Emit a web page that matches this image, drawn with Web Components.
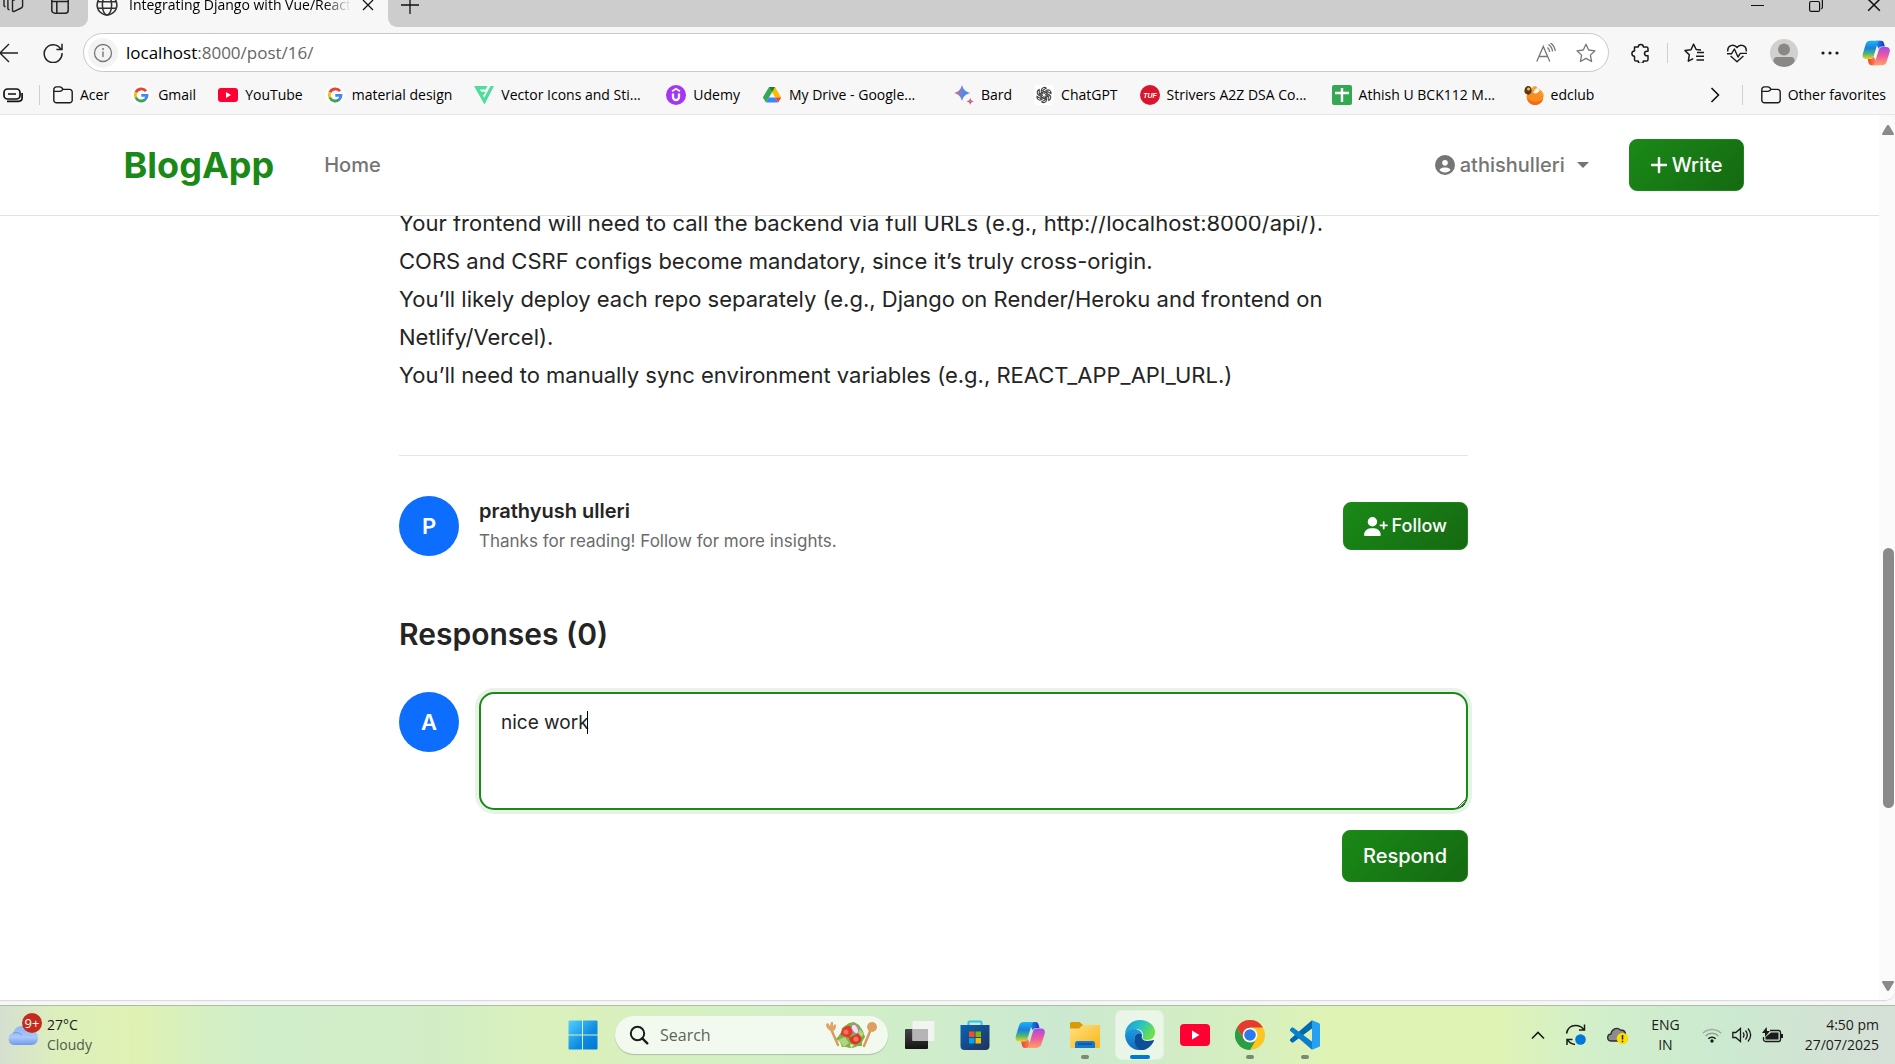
<!DOCTYPE html>
<html lang="en">
<head>
<meta charset="utf-8">
<title>Integrating Django with Vue/React</title>
<style>
html,body{margin:0;height:100%;background:#f7f7f7;overflow:hidden}
body{font-family:"Open Sans","Noto Sans",sans-serif;font-size:14px;color:#000}
</style>
</head>
<body>
<desktop-shell>
  <browser-tabs slot="browser"></browser-tabs>
  <browser-toolbar slot="browser"></browser-toolbar>
  <bookmarks-bar slot="browser"></bookmarks-bar>
  <page-viewport slot="page">
    <blog-navbar></blog-navbar>
    <blog-article>
      <p>Your frontend will need to call the backend via full URLs (e.g., http://localhost:8000/api/).<br>CORS and CSRF configs become mandatory, since it’s truly cross-origin.<br>You’ll likely deploy each repo separately (e.g., Django on Render/Heroku and frontend on Netlify/Vercel).<br>You’ll need to manually sync environment variables (e.g., REACT_APP_API_URL.)</p>
      <author-card slot="after" name="prathyush ulleri"></author-card>
      <blog-responses slot="after"></blog-responses>
    </blog-article>
  </page-viewport>
  <task-bar slot="taskbar"></task-bar>
</desktop-shell>
<script>
const G = '<circle cx="10" cy="10" r="10" fill="#fff"/><g fill="none" stroke-width="2.8"><path d="M15 6.2A6 6 0 0 0 4.9 7.4" stroke="#ea4335"/><path d="M4.9 7.3a6 6 0 0 0 0 5.4" stroke="#fbbc05"/><path d="M4.8 12.5a6 6 0 0 0 9.4 2" stroke="#34a853"/><path d="M10.3 10.4H16a6 6 0 0 1-2 4.3" stroke="#4285f4"/></g>';
const COPILOT = `<defs>
<linearGradient id="a" x1="0" y1="0" x2="0" y2="1"><stop offset="0" stop-color="#1db4f0"/><stop offset=".4" stop-color="#1a7fe0"/><stop offset=".7" stop-color="#4bb37a"/><stop offset="1" stop-color="#f4d31a"/></linearGradient>
<linearGradient id="b" x1="0" y1="0" x2="0" y2="1"><stop offset="0" stop-color="#a34be8"/><stop offset=".5" stop-color="#ee5c9c"/><stop offset="1" stop-color="#ffa166"/></linearGradient>
<linearGradient id="c" x1="0" y1="0" x2="1" y2="0"><stop offset="0" stop-color="#1f8fe8"/><stop offset="1" stop-color="#1632b8"/></linearGradient>
<linearGradient id="d" x1="0" y1="0" x2="1" y2="0"><stop offset="0" stop-color="#f0442e"/><stop offset="1" stop-color="#f98a5c"/></linearGradient></defs>
<path d="M15 2h5.5c2 0 2.6 1.200 3.100 2.800L24.500 8h-3c-2 0-3 .8-3.600 2.600L16 7z" fill="url(#c)"/>
<path d="M8.800 2H20c-2 0-3 1.500-3.600 3.600l-3.600 12.200c-.7 2.400-2 3.600-4.200 3.600H4.500C1 21.400 0 19 1 15.600L4 5.400C4.800 3.100 6.400 2 8.800 2z" fill="url(#a)"/>
<path d="M15.500 28H10c-2 0-2.600-1.200-3.100-2.800L6.200 21.400H9c2 0 3-.8 3.600-2.600l2 4z" fill="url(#d)"/>
<path d="M21.200 28H10.500c2 0 3-1.500 3.600-3.600l3.600-12.200c.7-2.400 2-3.600 4.200-3.600h4.100c3.500 0 4.500 2.400 3.500 5.800l-3.200 10.200c-.8 2.300-2.700 3.400-5.100 3.400z" fill="url(#b)"/>`;
const FOLDER = '<g fill="none" stroke="#1a1a1a" stroke-width="1.4"><path d="M.8 4.500a2.600 2.600 0 0 1 2.600-2.600h3.400c.9 0 1.500.3 2 .9l1.400 1.600h6.400a2.600 2.600 0 0 1 2.600 2.600v8.200a2.600 2.600 0 0 1-2.600 2.600H3.400a2.600 2.600 0 0 1-2.600-2.600z"/><path d="M1 6.400h5.600c1 0 1.600-.3 2.200-.9l1-1"/></g>';
const YT = '<rect y="3" width="20" height="14" rx="3" fill="#ff0033"/><path d="M8 7l5 3-5 3z" fill="#fff"/>';
/* name: [viewBox width, viewBox height, markup] */
const ICONS = {
 workspaces:[24,20,'<g fill="none" stroke="#222" stroke-width="1.400"><path d="M10.500 5.500l8.500-3.400c.8-.3 1.600.2 1.600 1V11c0 1-.5 1.600-1.300 2l-7 3.400c-1 .4-1.800 0-1.800-1z"/><path d="M7.500 14.500c-1 .3-1.600-.2-1.600-1.200V5.500c0-1 .5-1.600 1.300-2L13 1M3.500 11.500C2.500 11.800 2 11 2 10V4c0-1 .5-1.600 1.300-2"/></g>'],
 tabpane:[20,20,'<g fill="none" stroke="#222" stroke-width="1.500"><rect x="1.800" y="1.800" width="16.400" height="16.400" rx="3"/><path d="M2 6.500h16M6.800 6.500V18"/></g>'],
 globe:[20,20,'<g fill="none" stroke="#333" stroke-width="1.400"><circle cx="10" cy="10" r="9"/><ellipse cx="10" cy="10" rx="4.200" ry="9"/><path d="M1.600 7h16.800M1.600 13h16.800"/></g>'],
 close:[12,12,'<path d="M1 1l10 10M11 1L1 11" stroke="#111" stroke-width="1.300" fill="none"/>'],
 plus:[18,18,'<path d="M9 0v18M0 9h18" stroke="#111" stroke-width="1.300"/>'],
 min:[14,14,'<path d="M0 7.500h13" stroke="#111"/>'],
 restore:[14,14,'<g fill="none" stroke="#111" stroke-width="1.200"><rect x=".6" y="3.500" width="10" height="9.900" rx="1.500"/><path d="M3 1.500C3.500.8 4 .6 5 .6h6a2.500 2.500 0 0 1 2.400 2.500v6c0 1-.4 1.500-1 2"/></g>'],
 back:[18,20,'<path d="M18 10H0M9 1L0 10l9 9" fill="none" stroke="#222" stroke-width="1.400"/>'],
 reload:[20,20,'<path d="M17.700 6A8.900 8.900 0 1 0 19 10M19 .8V6.400h-5.600" fill="none" stroke="#222" stroke-width="1.500"/>'],
 info:[30,30,'<circle cx="15" cy="15" r="15" fill="#f3f3f3"/><circle cx="15" cy="15" r="8.500" fill="none" stroke="#777" stroke-width="1.300"/><path d="M15 13.500v5.500" stroke="#777" stroke-width="1.400"/><circle cx="15" cy="11" r="1" fill="#777"/>'],
 read:[20,20,'<g fill="none" stroke="#777" stroke-width="1.300"><path d="M.8 18.500L7.300 3.500l6.500 15M3 13.500h8.600M11.500 4.500c1.200 1 2 2.500 2.200 4.500M12.500 1.500c2.500 1.800 3.800 4 4 7M14.500 0c2.800 2 4.300 4.600 4.700 8"/></g>'],
 star:[20,20,'<path d="M10 1.200l2.700 5.800 6.300.8-4.600 4.300 1.200 6.400L10 15.400l-5.600 3.100 1.200-6.400L1 7.800 7.300 7z" fill="none" stroke="#777" stroke-width="1.300" stroke-linejoin="round"/>'],
 puzzle:[20,20,'<path d="M3.500 4h3.700a2.600 2.600 0 0 1 5.200 0h3c1 0 1.600.6 1.600 1.600v2.600h-1.200a2.300 2.300 0 0 0 0 4.600H17v3.600c0 1-.6 1.600-1.600 1.600h-3a2.600 2.600 0 0 1-5.200 0H5.100c-1 0-1.600-.6-1.600-1.600v-3.200a2.600 2.600 0 0 1 0-5.200z" fill="none" stroke="#1a1a1a" stroke-width="1.500" stroke-linejoin="round"/>'],
 favs:[20,20,'<path d="M17 7l-4.800-.5L9.500 1.200 7 6.700l-6 .9 4.300 4.200-1 6.400 4.900-2.600M13 9.500h7M12 13.300h8M12.500 17h7.500" fill="none" stroke="#1a1a1a" stroke-width="1.500" stroke-linejoin="round"/>'],
 heart:[20,20,'<path d="M.8 8.500c-.8-6 6-8.200 9.200-4 3.200-4.200 10-2 9.200 4M3.600 13L10 18.800l6.400-5.800M0 10.700h4.600L7.400 6l3.600 8 2.300-3.600H20" fill="none" stroke="#1a1a1a" stroke-width="1.400" stroke-linejoin="round"/>'],
 profile:[28,28,'<defs><clipPath id="k"><circle cx="14" cy="14" r="14"/></clipPath></defs><circle cx="14" cy="14" r="14" fill="#d2d0ce"/><g clip-path="url(#k)" fill="#8a8886"><circle cx="14" cy="10.500" r="6"/><path d="M3.500 21.500c0-2.500 1.500-3.500 4-3.500h13c2.500 0 4 1 4 3.500 0 3-4 6.500-10.500 6.500S3.500 24.500 3.500 21.500z"/></g>'],
 dots:[18,18,'<g fill="#1a1a1a"><circle cx="2" cy="9" r="1.600"/><circle cx="9" cy="9" r="1.600"/><circle cx="16" cy="9" r="1.600"/></g>'],
 copilot:[30,30,COPILOT],
 pill:[20,16,'<g fill="none" stroke="#111" stroke-width="1.700"><rect x="1" y="2" width="16" height="10" rx="3.500"/><path d="M4 14.300h11.500c2.200 0 3.600-1.500 3.600-3.500V6M5 7h8"/></g>'],
 folder:[20,20,FOLDER], google:[20,20,G], youtube:[20,20,YT],
 vector:[20,20,'<path d="M0 1h13.500l-2 3.500H6l1.200 2.300h4.300L9.800 10H8.700l1.400 2.800L16.500 1H20L10.500 19.500z" fill="#4fdc9c"/>'],
 udemy:[20,20,'<circle cx="10" cy="10" r="10" fill="#a435f0"/><path d="M6 6.200l4-2.400 4 2.400" fill="none" stroke="#fff" stroke-width="1.800"/><path d="M7 8.500V12a3 3 0 0 0 6 0V8.500" fill="none" stroke="#fff" stroke-width="2.300"/>'],
 drive:[20,20,'<path d="M7 2h6l6.200 10.500h-6z" fill="#fbbc04"/><path d="M7 2l3 5.200L4 17.600.8 12.500z" fill="#34a853"/><path d="M6.900 12.500h6.300l3 5H4z" fill="#4285f4"/><path d="M13.200 12.500h6l-3 5z" fill="#ea4335"/><path d="M7 2h6l-3 5.200z" fill="#188038"/>'],
 bard:[20,20,'<defs><linearGradient id="g"><stop offset="0" stop-color="#ef5f6b"/><stop offset=".4" stop-color="#7b7fd6"/><stop offset=".75" stop-color="#3f8ee8"/><stop offset="1" stop-color="#6a8be0"/></linearGradient></defs><path d="M8 0c1.600 5 3.200 6.500 8.500 8-5.300 1.500-6.900 3-8.500 8C6.400 11 4.800 9.500 0 8c4.800-1.500 6.400-3 8-8z" fill="url(#g)"/><path d="M16.200 12.800c.7 2.400 1.400 3.200 3.800 3.800-2.400.6-3.100 1.200-3.800 3.400-.7-2.200-1.400-2.800-3.800-3.400 2.400-.6 3.100-1.400 3.800-3.800z" fill="#d4648a"/>'],
 gpt:[20,20,'<rect width="20" height="20" rx="4" fill="#fff"/><g fill="none" stroke="#444" stroke-width="1.100">'+[0,60,120,180,240,300].map(a=>`<path transform="rotate(${a} 10 10)" d="M7.300 8.400V5.200a3 3 0 0 1 5-2l-3.600 2.100v4.200M7.300 5l5.400 3.200"/>`).join('')+'</g>'],
 tuf:[20,20,'<circle cx="10" cy="10" r="10" fill="#d8152c"/><text x="10" y="12.500" text-anchor="middle" font-family="Liberation Sans" font-size="7" font-weight="700" font-style="italic" fill="#fff">TUF</text>'],
 sheets:[20,20,'<rect width="20" height="20" rx="2" fill="#34a853"/><path d="M10 3v14M3 8h14" stroke="#fff" stroke-width="2.400"/>'],
 edclub:[20,20,'<circle cx="11" cy="11.500" r="8.500" fill="#fb8c1e"/><path d="M11 1c-2.500.3-3.500 2-3 4.500l3 1.500 1-3 1.500.5c.3-1.300-.6-3-2.500-3.500z" fill="#f5a03a"/><path d="M15.500 5c2.200.7 4 3 4.500 5.500l-3 0z" fill="#f7a12c"/><path d="M9 7.500c2 1.500 4 1.500 7-2l-2.500-2.500-2 1z" fill="#f7f7f7"/><path d="M3 13c4 4.500 11 5 16.300 1-1.500 4-4.500 6-8.300 6s-7-2.500-8-7z" fill="#f26a1b"/><path d="M.5 7C0 3.500 2 .8 4.500 1S8 4 7.500 6.500 5 10 3.500 9.500 1 8.500.5 7z" fill="#5a3914"/><circle cx="4.600" cy="4" r="1.600" fill="#f7c04a"/>'],
 chev:[10,16,'<path d="M1.500 1l7 7-7 7" fill="none" stroke="#111" stroke-width="1.600"/>'],
 user:[512,512,'<path fill="currentColor" d="M399 384.200C376.900 345.800 335.400 320 288 320H224c-47.400 0-88.900 25.800-111 64.200c35.200 39.200 86.200 63.800 143 63.800s107.800-24.700 143-63.800zM0 256a256 256 0 1 1 512 0A256 256 0 1 1 0 256zm256 16a72 72 0 1 0 0-144 72 72 0 1 0 0 144z"/>'],
 write:[448,512,'<path fill="currentColor" d="M256 80c0-17.700-14.300-32-32-32s-32 14.300-32 32V224H48c-17.700 0-32 14.300-32 32s14.300 32 32 32H192V432c0 17.700 14.300 32 32 32s32-14.300 32-32V288H400c17.700 0 32-14.300 32-32s-14.300-32-32-32H256V80z"/>'],
 follow:[640,512,'<path fill="currentColor" d="M96 128a128 128 0 1 1 256 0A128 128 0 1 1 96 128zM0 482.300C0 383.800 79.800 304 178.300 304h91.400C368.200 304 448 383.800 448 482.300c0 16.400-13.300 29.700-29.700 29.700H29.700C13.300 512 0 498.700 0 482.300zM504 312V248H440c-13.300 0-24-10.700-24-24s10.700-24 24-24h64V136c0-13.300 10.700-24 24-24s24 10.700 24 24v64h64c13.300 0 24 10.700 24 24s-10.700 24-24 24H552v64c0 13.300-10.700 24-24 24s-24-10.700-24-24z"/>'],
 caret:[12,6,'<path d="M0 0h12L6 6z" fill="currentColor"/>'],
 up:[12,10,'<path d="M6 0c.6 0 1 .3 1.300.8l4.500 7.600c.4.800 0 1.600-.8 1.600H1c-.8 0-1.200-.8-.8-1.600L4.700.8C5 .3 5.400 0 6 0z" fill="#8a8a8a"/>'],
 down:[12,10,'<path d="M6 10c.6 0 1-.3 1.300-.8l4.500-7.600c.4-.8 0-1.600-.8-1.600H1c-.8 0-1.200.8-.8 1.600l4.500 7.600c.3.500.7.800 1.300.8z" fill="#8a8a8a"/>'],
 cloud:[30,20,'<defs><linearGradient id="l" x1="0" y1="0" x2="0" y2="1"><stop offset="0" stop-color="#8fb4f2"/><stop offset=".6" stop-color="#a9c8fa"/><stop offset="1" stop-color="#6d98ea"/></linearGradient></defs><path d="M6 20a6.200 6.200 0 0 1-.6-12.200A8.500 8.500 0 0 1 13 1c3 0 5.500 1 7 4 5.500-1 10 3 10 8 0 4-2.500 7-6.500 7z" fill="url(#l)"/><path d="M5 8c4-1 7 0 9 2" stroke="#6d98ea" fill="none"/>'],
 start:[30,30,'<defs><linearGradient id="w" x1="0" y1="0" x2="1" y2="1"><stop offset="0" stop-color="#4fd2ff"/><stop offset=".6" stop-color="#0e8be0"/><stop offset="1" stop-color="#0078d4"/></linearGradient></defs><path d="M1.500.5H14v14H.5v-13a1 1 0 0 1 1-1zM15 .5h13.500a1 1 0 0 1 1 1v13H15zM.5 15.500H14v14H1.500a1 1 0 0 1-1-1zM15 15.500h14.500v13a1 1 0 0 1-1 1H15z" fill="url(#w)"/>'],
 search:[20,20,'<circle cx="8.500" cy="8.500" r="6.700" fill="none" stroke="#1b1b1b" stroke-width="2"/><path d="M13.300 13.300l5 5" stroke="#1b1b1b" stroke-width="2.400" stroke-linecap="round"/>'],
 salad:[52,28,'<g stroke-linecap="round" fill="none" stroke="#d99a5b"><path d="M6 8l7 16" stroke-width="2.500"/><path d="M46 8l-7 17" stroke-width="2.500"/></g><path d="M1 3l2-1 2 3 1-4 2 0 0 4 2-2 1 1c0 4-1 6-4 6S1 7 1 3z" fill="#e0a468"/><circle cx="47" cy="6" r="5" fill="#dda062"/><ellipse cx="26" cy="17" rx="12" ry="10" fill="#c98a4c"/><path d="M11 18l5-6 1-5 7-5 5-1 5 3 4 6 2 6-3 5 0 4-6 0-4 2-5-1-5 0-2-5z" fill="#7cb342"/><path d="M16 14c0-6 4-10 9-9l3 6-4 6z" fill="#e5392e"/><circle cx="21" cy="11" r="2.500" fill="#f2705f"/><path d="M24 17l10-5c4 4 3 9-2 11-4 1-7-1-8-6z" fill="#df3328"/><circle cx="31" cy="18" r="2.600" fill="#f07463"/><ellipse cx="30" cy="8" rx="3" ry="5" fill="#eee3f0" stroke="#b679ac" transform="rotate(-25 30 8)"/><path d="M13 19l7-3 4 6-5 4zM35 8l4 5-3 3-3-4z" fill="#aed581"/><path d="M25 23l4 1-3 3z" fill="#f5e9c8"/>'],
 taskview:[30,30,'<defs><linearGradient id="t" x1="0" y1="0" x2="0" y2="1"><stop offset="0" stop-color="#454545"/><stop offset="1" stop-color="#151515"/></linearGradient></defs><rect y="9" width="23" height="20" rx="1" fill="url(#t)"/><rect x="7.500" y="1" width="22" height="20" rx="1" fill="#f4f4f4" fill-opacity=".93"/><path d="M7.500 9H23v12H7.500z" fill="#b5b5b5"/>'],
 store:[30,30,'<defs><linearGradient id="s" x1="0" y1="0" x2="1" y2="1"><stop offset="0" stop-color="#0a63b5"/><stop offset="1" stop-color="#21325c"/></linearGradient></defs><path d="M8.500 6V2.500a1 1 0 0 1 1-1h11a1 1 0 0 1 1 1V6" fill="none" stroke="#2bc4f3" stroke-width="2"/><path d="M.5 5h29v21a4 4 0 0 1-4 4h-21a4 4 0 0 1-4-4z" fill="url(#s)"/><path d="M9 11.500h5.500V17H9z" fill="#f25022"/><path d="M15.500 11.500H21V17h-5.500z" fill="#7fba00"/><path d="M9 18h5.500v5.500H9z" fill="#00a4ef"/><path d="M15.500 18H21v5.500h-5.500z" fill="#ffb900"/>'],
 explorer:[30,30,'<defs><linearGradient id="e" x1="0" y1="0" x2="1" y2="1"><stop offset="0" stop-color="#ffe082"/><stop offset="1" stop-color="#f9b618"/></linearGradient></defs><path d="M0 3.500a1.500 1.500 0 0 1 1.500-1.500h8L13 5v4H0z" fill="#d99a07"/><path d="M0 8.500h9L13 5h17v21.500a1.500 1.500 0 0 1-1.500 1.500h-27A1.500 1.500 0 0 1 0 26.500z" fill="url(#e)"/><path d="M5 28v-4.500A2.500 2.500 0 0 1 7.500 21h15a2.500 2.500 0 0 1 2.500 2.500V28z" fill="#1577cf"/><path d="M8 24h14" stroke="#0b4f94" stroke-width="1.500"/>'],
 edge:[30,30,'<defs><linearGradient id="m" x1="0" y1="0" x2="1" y2=".4"><stop offset="0" stop-color="#1a93d8"/><stop offset=".55" stop-color="#2bc3c4"/><stop offset="1" stop-color="#6be04a"/></linearGradient><linearGradient id="n" x1="0" y1="0" x2="0" y2="1"><stop offset="0" stop-color="#1b9de0"/><stop offset="1" stop-color="#0f6ac0"/></linearGradient></defs><path d="M0 14C.5 6 7 0 15 0c9 0 15 6 15 12 0 5-3.500 8-8 8-3 0-5-1-4.500-2.500C19 16 18.500 9 11 9 5 9 1 12 0 14z" fill="url(#m)"/><path d="M0 14.500C1 11 5 8.500 10 9c4 .3 7 3 7.200 6-2-3-7-2-7.700 3C9 22 12 28.500 18 29.700 8 32 0 24 0 14.500z" fill="url(#n)"/><path d="M9.500 18c.7-5 5.500-6.200 7.800-3.200-1.500 3 0 6.200 5.200 6.200 3 0 5.500-1 6-1 .5 0 .6.400.4.900C26.500 26 22 30 16.500 30 12 29.500 8.500 23 9.500 18z" fill="#0d4f96"/>'],
 youtubeL:[30,30,'<rect y="4" width="30" height="22" rx="4" fill="#ff0033"/><path d="M12 10.500l7.500 4.500-7.500 4.500z" fill="#fff"/>'],
 chrome:[30,30,'<circle cx="15" cy="15" r="15" fill="#fcc521"/><path d="M2 7.500A15 15 0 0 1 28 7.500H15L8.500 18.700z" fill="#e33b2e"/><path d="M2 7.500L8.500 18.700c1.300 2.300 3.700 3.800 6.500 3.800 2.400 0 4-.6 5.500-2L15 30A15 15 0 0 1 2 7.500z" fill="#2a9d49"/><circle cx="15" cy="15" r="7.300" fill="#fff"/><circle cx="15" cy="15" r="5.800" fill="#2a7bf0"/>'],
 vscode:[30,30,'<path d="M22 .3v8.200L3.500 22.300a1.500 1.500 0 0 1-2 0L.3 21a1.300 1.300 0 0 1 0-2z" fill="#0069b0"/><path d="M22 29.700v-8.200L3.500 7.700a1.500 1.500 0 0 0-2 0L.3 9a1.300 1.300 0 0 0 0 2z" fill="#0a80cc"/><path d="M22 .2l6.800 2.700c.8.400 1.200 1 1.200 1.900v20.400c0 .9-.4 1.500-1.200 1.900L22 29.800z" fill="#26a1f2"/>'],
 upchev:[14,10,'<path d="M1 8.500l6-6 6 6" fill="none" stroke="#1b1b1b" stroke-width="1.600"/>'],
 sync:[22,22,'<path d="M1.500 9.500C2.500 4.500 6 1.500 10.500 1.500c4 0 7 2 8.500 4.500M19.500.5V6H14M2 21v-5.500h5.500M2.500 15.500c1.500 3 4 4.500 7.500 5" fill="none" stroke="#1b1b1b" stroke-width="1.500"/><circle cx="15.500" cy="15.500" r="5.300" fill="#0078d7"/>'],
 onedrive:[22,20,'<path d="M4.500 16C-.5 16-.5 9.500 4 9c.5-5 6-7.500 9.500-4 3.500 0 5 2 5 4.500v4L14 16z" fill="#8c8c8c" stroke="#2b2b2b" stroke-width="1.300"/><circle cx="15.500" cy="13.500" r="5.800" fill="#ffdd00"/><path d="M15.500 10v4.400M15.500 15.700v1.600" stroke="#222" stroke-width="1.500"/>'],
 wifi:[20,16,'<g fill="none" stroke-width="1.500"><path d="M.8 6.200a13 13 0 0 1 18.400 0" stroke="#9fb39f"/><path d="M3.600 9a9 9 0 0 1 12.800 0" stroke="#8ea08e"/><path d="M6.300 11.700a5.200 5.200 0 0 1 7.400 0" stroke="#1b1b1b"/></g><circle cx="10" cy="14" r="1.700" fill="#1b1b1b"/>'],
 volume:[20,16,'<g fill="none" stroke="#1b1b1b" stroke-width="1.300"><path d="M.8 5.500h3L8.500 1.500v13l-4.700-4h-3zM11 5.500c1.200 1.500 1.200 3.500 0 5M13.500 3.500c2.200 2.700 2.200 6.300 0 9M16 1.500c3.300 4 3.300 9 0 13"/></g>'],
 battery:[21,16,'<path d="M8 3.500h8.500a2 2 0 0 1 2 2v7a2 2 0 0 1-2 2H3.500a2 2 0 0 1-2-2V10" fill="none" stroke="#1b1b1b" stroke-width="1.300"/><path d="M9 5.500h7.500v7H3.500V10z" fill="#1b1b1b"/><path d="M19 7h2v4h-2zM4.500 0L0 6h3v4l5-6H5z" fill="#1b1b1b"/>']
};

/* Registers an element whose shadow root holds the given styles and markup. */
function define(tag, css, html){
  customElements.define(tag, class extends HTMLElement{
    constructor(){ super(); this.attachShadow({mode:'open'}); }
    connectedCallback(){
      const t=document.createElement('template');
      t.innerHTML=`<style>:host,*{box-sizing:border-box}${css}</style>`+(typeof html==='function'?html(this):html);
      this.shadowRoot.replaceChildren(t.content.cloneNode(true));
    }
  });
}
const ic=(name,w,h=w)=>`<ui-icon name="${name}" w="${w}" h="${h}"></ui-icon>`;

define('ui-icon', ':host{display:inline-flex;flex:none}svg{display:block}', el=>{
  const [w,h,m]=ICONS[el.getAttribute('name')];
  return `<svg viewBox="0 0 ${w} ${h}" width="${el.getAttribute('w')}" height="${el.getAttribute('h')}" aria-hidden="true">${m}</svg>`;
});

define('desktop-shell', `
:host{display:flex;flex-direction:column;height:100vh;background:#f7f7f7}
slot{display:block}
slot[name=page]{display:flex;flex:1;min-height:0}
`, '<slot name="browser"></slot><slot name="page"></slot><slot name="taskbar"></slot>');

define('browser-tabs', `
:host{display:flex;align-items:flex-end;height:27px;overflow:hidden;background:#f7f7f7}
.part{display:flex;align-items:center;height:44px;background:#cdcdcd}
.left{width:88px;border-bottom-right-radius:9px;gap:24px;padding-left:2px}
.tab{width:300px;background:#f7f7f7;padding:0 14px 0 8px;gap:11px}
.tab span{flex:1;overflow:hidden;white-space:nowrap;font-size:14px;line-height:20px;-webkit-mask:linear-gradient(90deg,#000 88%,transparent)}
.rest{flex:1;border-bottom-left-radius:9px;padding:0 14px 0 13px;justify-content:space-between}
.win{display:flex;gap:44px}
button{all:unset;display:flex}
`, `<div class="part left"><button aria-label="Workspaces">${ic('workspaces',24,20)}</button><button aria-label="Tab actions">${ic('tabpane',20)}</button></div>
<div class="part tab">${ic('globe',22)}<span>Integrating Django with Vue/React</span><button aria-label="Close tab">${ic('close',12)}</button></div>
<div class="part rest"><button aria-label="New tab">${ic('plus',18)}</button><div class="win"><button aria-label="Minimise">${ic('min',14)}</button><button aria-label="Restore">${ic('restore',14)}</button><button aria-label="Close">${ic('close',14)}</button></div></div>`);

define('browser-toolbar', `
:host{display:flex;align-items:center;padding:6px 5px 0 0;background:#f7f7f7}
button{all:unset;display:flex;flex:none}
.nav{display:flex;align-items:center;gap:25px;width:83px}
.address{flex:1;display:flex;align-items:center;height:39px;border:1px solid #c9c9c9;border-radius:20px;background:#fff;padding:0 12px 0 4px}
.url{flex:1;display:flex;margin-left:8px;font-size:17px;line-height:24px}
.url b{font-weight:400}.url span{color:#666}
.icons{display:flex;gap:20px}
.tools{display:flex;align-items:center;gap:23px;margin-left:22px}
i{width:1px;height:20px;background:#cfcfcf;margin:0 -7px}
`, `<div class="nav"><button aria-label="Back">${ic('back',18,20)}</button><button aria-label="Refresh">${ic('reload',20)}</button></div>
<div class="address"><button aria-label="Site information">${ic('info',30)}</button><div class="url" role="textbox" tabindex="0" aria-label="Address"><b>localhost</b><span>:8000/post/16/</span></div>
<div class="icons"><button aria-label="Read aloud">${ic('read',20)}</button><button aria-label="Add favourite">${ic('star',20)}</button></div></div>
<div class="tools"><button aria-label="Extensions">${ic('puzzle',20)}</button><i></i><button aria-label="Favourites">${ic('favs',20)}</button><button aria-label="Essentials">${ic('heart',20)}</button><button aria-label="Profile">${ic('profile',28)}</button><button aria-label="More">${ic('dots',18)}</button><button aria-label="Copilot">${ic('copilot',28)}</button></div>`);

define('bookmark-link', `
:host{display:block;flex:none}
a{display:flex;align-items:center;gap:7px;color:#000;text-decoration:none;white-space:nowrap;font-size:14px;line-height:20px}
:host([long]) span{width:143px}
`, el=>`<a href="#">${ic(el.getAttribute('icon'),20)}<span><slot></slot></span></a>`);

define('bookmarks-bar', `
:host{display:flex;align-items:center;height:43px;padding:4px 9px 0 3px;border-bottom:1px solid #e6e6e6;background:#f7f7f7}
button{all:unset;display:flex}
i{flex:none;width:1px;height:20px;background:#cfcfcf;margin:0 13px 0 16px}
.list{display:flex;gap:22px;flex:1;overflow:hidden}
.more{display:flex;align-items:center}.more i{margin:0 18px 0 22px}
`, `<button aria-label="Favourites bar">${ic('pill',20,16)}</button><i></i><div class="list">`+
[['folder','Acer'],['google','Gmail'],['youtube','YouTube'],['google','material design'],['vector','Vector Icons and Sti...',1],['udemy','Udemy'],['drive','My Drive - Google...',1],['bard','Bard'],['gpt','ChatGPT'],['tuf','Strivers A2Z DSA Co...',1],['sheets','Athish U BCK112 M...',1],['edclub','edclub']]
.map(([i,t,l])=>`<bookmark-link icon="${i}"${l?' long':''}>${t}</bookmark-link>`).join('')+
`</div><div class="more"><button aria-label="More favourites">${ic('chev',10,16)}</button><i></i><bookmark-link icon="folder">Other favorites</bookmark-link></div>`);

define('page-viewport', `
:host{display:flex;flex:1;min-width:0;margin-bottom:5px;background:#fff;border-radius:0 10px 10px 0;overflow:hidden;box-shadow:0 1px 1px #d8d8d8;font-family:Inter,sans-serif}
main{flex:1;min-width:0;overflow:hidden}
.bar{display:flex;flex-direction:column;align-items:center;width:16px;padding:10px 1px 9px 3px;background:#fbfbfb}
.track{flex:1;width:11px;display:flex;flex-direction:column}
.track::before{content:"";flex:413}
.thumb{flex:260;border-radius:6px;background:#8a8a8a}
.track::after{content:"";flex:173}
`, `<main><slot></slot></main><div class="bar">${ic('up',12,10)}<div class="track"><div class="thumb"></div></div>${ic('down',12,10)}</div>`);

const BTN=`button{font-family:inherit;font-weight:500;color:#fff;border:1px solid #1a8917;border-radius:8px;background:linear-gradient(135deg,#1a8917,#156912);display:inline-flex;align-items:center;justify-content:center;gap:4px;padding:0 20px;height:52px;font-size:20px;line-height:30px;white-space:nowrap}`;

define('blog-navbar', `
:host{display:block;position:relative;z-index:1;background:#fff;border-bottom:1px solid #e2e2e2;padding-right:12px}
nav{display:flex;align-items:center;height:100px;max-width:1620px;margin:0 auto}
a{color:#757575;text-decoration:none;font-weight:500;font-size:20px;line-height:30px;display:flex;align-items:center}
.brand{font-size:36px;line-height:54px;font-weight:700;color:#1a8917;margin-right:50px}
.user{gap:5px;margin-left:auto;margin-right:40px}
.user ui-icon:last-child{margin-left:7px}
${BTN}
`, `<nav><a class="brand" href="#">BlogApp</a><a href="#">Home</a><a class="user" href="#">${ic('user',20)}athishulleri${ic('caret',12,6)}</a><button>${ic('write',18,20)}Write</button></nav>`);

define('blog-article', `
:host{display:block;margin-top:-12px;padding-right:12px}
article{max-width:1069px;margin:0 auto}
.prose{font-size:22px;line-height:38px;color:#242424;padding-bottom:61px;border-bottom:1px solid #e6e6e6}
::slotted(p){margin:0}
`, '<article><div class="prose"><slot></slot></div><slot name="after"></slot></article>');

define('user-avatar', `
:host{display:flex;flex:none;align-items:center;justify-content:center;width:60px;height:60px;border-radius:50%;background:#0d6efd;color:#fff;font-size:22px;font-weight:600}
`, '<slot></slot>');

define('author-card', `
:host{display:flex;align-items:center;gap:20px;padding:40px 0}
.who{flex:1}
.name{font-size:20px;line-height:30px;font-weight:600;color:#242424}
.note{font-size:17px;line-height:30px;color:#6b6b6b}
${BTN}
button{height:48px;font-size:18px}
`, el=>`<user-avatar>P</user-avatar><div class="who"><div class="name">${el.getAttribute('name')}</div><div class="note">Thanks for reading! Follow for more insights.</div></div><button>${ic('follow',24,19)}Follow</button>`);

define('blog-responses', `
:host{display:block;padding-top:20px}
h2{margin:0 0 40px;font-size:30px;line-height:36px;font-weight:600;color:#242424}
form{display:flex;gap:20px}
.field{flex:1;display:flex;flex-direction:column;align-items:flex-end;gap:20px}
.box{position:relative;width:100%}
textarea{display:block;width:100%;height:118px;border:2px solid #1a8917;border-radius:15px;box-shadow:0 0 0 4px #e8f3e8;outline:0;padding:14px 20px;font:400 19px/30px Inter,sans-serif;color:#242424;caret-color:transparent;resize:vertical;background:#fff}
.cursor{position:absolute;left:108px;top:19px;width:1px;height:23px;background:#000}
${BTN}
`, `<h2>Responses (0)</h2><form><user-avatar>A</user-avatar><div class="field"><div class="box"><textarea aria-label="Your response">nice work</textarea><span class="cursor"></span></div><button type="button">Respond</button></div></form>`);

define('task-app', `
:host{display:block;flex:none}
button{all:unset;position:relative;display:flex;align-items:center;justify-content:center;width:55px;height:48px}
:host([active]) button{background:#ffffff8c;border-radius:6px;width:47px;margin:0 4px;box-shadow:0 0 0 1px #ffffff60}
:host([open]) button::after{content:"";position:absolute;bottom:0;width:8px;height:4px;border-radius:2px;background:#7b8a72}
:host([active]) button::after{width:20px;background:#0078d4}
`, el=>`<button aria-label="${el.getAttribute('icon')}">${ic(el.getAttribute('icon'),30)}</button>`);

define('task-bar', `
:host{display:flex;align-items:center;height:59px;padding:0 10px 0 8px;border-top:1px solid #a9bda0;color:#1b1b1b;font-size:14px;
background:linear-gradient(90deg,#d6dfd0 0,#dcefbc 3%,#e0f2b3 7%,#d4efc2 11%,#d1eecb 14%,#d2edc6 23%,#daf1be 28%,#daf0bc 31%,#d3f0c6 40%,#d0edca 48%,#cbe9d0 56%,#d6efc0 66%,#dff3b5 70%,#dff3b5 79%,#d2efca 84%,#cbead0 91%,#d3e1d4 97%,#d5e0d6)}
.side{flex:1;display:flex;align-items:center}
.weather{position:relative;display:flex;align-items:center;gap:9px;line-height:20px;margin-top:-1px}
.weather em{font-style:normal;color:#4f5b4b}
.badge{position:absolute;left:14px;top:-2px;width:20px;height:20px;border-radius:50%;background:#c42b1c;color:#fff;font-size:13px;line-height:20px;text-align:center}
.apps{display:flex;align-items:center}
label{display:flex;align-items:center;gap:11px;width:273px;height:38px;border-radius:19px;margin:0 4px 0 5px;padding:0 11px 0 14px;background:#f2faef;box-shadow:0 1px 1px #a9bfa2}
input{all:unset;flex:1;min-width:0;font-size:16px;color:#5c645a}
input::placeholder{color:#5c645a;opacity:1}
.tray{justify-content:flex-end;line-height:20px;padding-right:6px}
.tray>*{flex:none}
.icons{display:flex;align-items:center;gap:20px}
.status{display:flex;align-items:center;gap:10px}
.lang{text-align:center;margin:0 22px}
.time{text-align:right;margin-left:22px}
`, `<div class="side"><div class="weather">${ic('cloud',30,20)}<span class="badge">9+</span><div>27°C<br><em>Cloudy</em></div></div></div>
<div class="apps"><task-app icon="start"></task-app><label>${ic('search',20)}<input placeholder="Search" aria-label="Search">${ic('salad',52,28)}</label>
<task-app icon="taskview"></task-app><task-app icon="store"></task-app><task-app icon="copilot"></task-app><task-app icon="explorer" open></task-app><task-app icon="edge" open active></task-app><task-app icon="youtubeL"></task-app><task-app icon="chrome" open></task-app><task-app icon="vscode" open></task-app></div>
<div class="side tray"><div class="icons">${ic('upchev',14,10)}${ic('sync',22)}${ic('onedrive',22,20)}</div><div class="lang">ENG<br>IN</div><div class="status">${ic('wifi',20,16)}${ic('volume',20,16)}${ic('battery',21,16)}</div><div class="time">4:50 pm<br>27/07/2025</div></div>`);

const area=document.querySelector('blog-responses').shadowRoot.querySelector('textarea');
area.focus();
area.setSelectionRange(area.value.length,area.value.length);
</script>
</body>
</html>
